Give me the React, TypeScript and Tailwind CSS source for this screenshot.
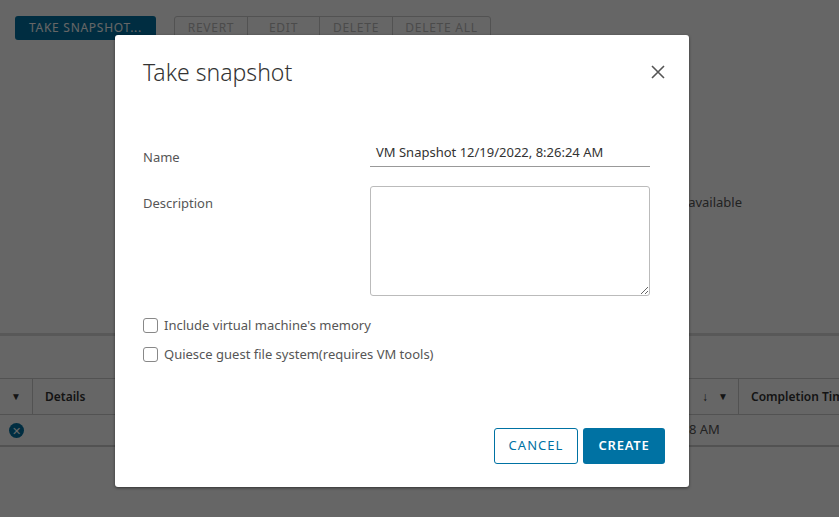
export default function App() {
  const f = { fontFamily: '"Noto Sans", "Open Sans", sans-serif' };
  return (
    <div className="relative w-[839px] h-[517px] overflow-hidden bg-white" style={f}>
      <div className="flex flex-col h-full">
        <div className="flex items-center gap-[18px] pl-[15px] pt-[15px] h-[40px]">
          <div className="h-[24px] w-[141px] rounded-[3px] bg-[#0072a3] text-white text-[12px] tracking-[0.06em] flex items-center justify-center">TAKE SNAPSHOT...</div>
          <div className="flex h-[24px] border border-[#ccc] rounded-[3px] text-[12px] tracking-[0.06em] text-[#bbb]">
            {["REVERT", "EDIT", "DELETE", "DELETE ALL"].map((t, i) => (
              <div key={t} className={`flex items-center justify-center ${i ? "border-l border-[#ccc]" : ""} ${["w-[72px]","w-[72px]","w-[73px]","w-[98px]"][i]}`}>{t}</div>
            ))}
          </div>
        </div>
        <div className="h-[293px] flex items-start justify-end pr-[97px] pt-[153px] text-[13px] text-[#565656]">available</div>
        <div className="h-[3px] bg-[#ddd]" />
        <div className="h-[42px]" />
        <div className="h-[37px] flex items-center border-t border-b border-[#ccc] text-[12px] text-[#333] font-semibold">
          <div className="w-[33px] h-full flex items-center justify-center border-r border-[#ccc] text-[10px]">▼</div>
          <div className="pl-[12px] flex-1">Details</div>
          <div className="w-[72px] h-full flex items-center justify-end gap-[10px] pr-[10px] border-r border-[#ccc] text-[#333]"><span className="font-normal">↓</span><span className="text-[10px]">▼</span></div>
          <div className="w-[100px] pl-[12px] whitespace-nowrap">Completion Time</div>
        </div>
        <div className="h-[32px] flex items-center border-b-2 border-[#ccc] text-[13px] text-[#565656]">
          <div className="w-[33px] flex justify-center">
            <div className="w-[15px] h-[15px] rounded-full bg-[#0072a3] text-white text-[11px] leading-[15px] text-center">✕</div>
          </div>
          <div className="flex-1" />
          <div className="w-[161px]">:18 AM</div>
        </div>
      </div>
      <div className="absolute inset-0 bg-black/60" />
      <div className="absolute left-[115px] top-[35px] w-[574px] h-[452px] bg-white rounded-[3px] shadow-[0_1px_3px_rgba(0,0,0,0.5)] pl-[28px] pr-[24px] pt-[20px] flex flex-col text-[#565656]">
        <div className="flex items-center justify-between">
          <div className="text-[23px] text-[#333] font-light">Take snapshot</div>
          <svg width="14" height="14" viewBox="0 0 14 14"><path d="M1 1L13 13M13 1L1 13" stroke="#555" strokeWidth="1.6" /></svg>
        </div>
        <div className="flex items-end mt-[53px] text-[13px]">
          <div className="w-[227px] pb-[0px]">Name</div>
          <div className="w-[280px] border-b border-[#999] pb-[4px] pl-[6px] text-[#333]">VM Snapshot 12/19/2022, 8:26:24 AM</div>
        </div>
        <div className="flex mt-[19px] text-[13px]">
          <div className="w-[227px] pt-[8px]">Description</div>
          <textarea className="w-[280px] h-[110px] border border-[#bbb] rounded-[3px] resize-y" />
        </div>
        <label className="flex items-center gap-[6px] mt-[20px] text-[13px]">
          <span className="w-[15px] h-[15px] border border-[#888] rounded-[3px]" />Include virtual machine's memory
        </label>
        <label className="flex items-center gap-[6px] mt-[9px] text-[13px]">
          <span className="w-[15px] h-[15px] border border-[#888] rounded-[3px]" />Quiesce guest file system(requires VM tools)
        </label>
        <div className="flex justify-end gap-[5px] mt-[64px]">
          <div className="w-[84px] h-[36px] border border-[#0072a3] rounded-[3px] text-[#0072a3] text-[13px] tracking-[0.08em] flex items-center justify-center">CANCEL</div>
          <div className="w-[82px] h-[36px] bg-[#0072a3] rounded-[3px] text-white text-[13px] font-semibold tracking-[0.06em] flex items-center justify-center">CREATE</div>
        </div>
      </div>
    </div>
  );
}
